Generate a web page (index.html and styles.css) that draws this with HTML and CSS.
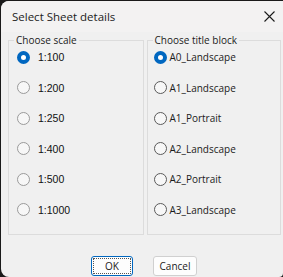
FILE: index.html
```html
<!DOCTYPE html>
<html lang="en">
<head>
  <meta charset="UTF-8" />
  <title>Select Sheet details</title>
  <link rel="stylesheet" href="styles.css">
</head>
<body>
  <div class="window">
    <div class="titlebar">
      <span class="title">Select Sheet details</span>
      <svg class="close" width="11" height="11" viewBox="0 0 11 11">
        <path d="M0.5 0.5 L10.5 10.5 M10.5 0.5 L0.5 10.5" stroke="#1b1b1b" stroke-width="1.1" fill="none"/>
      </svg>
    </div>

    <div class="groups">
      <fieldset class="group scale">
        <legend>Choose scale</legend>
        <div class="option"><span class="radio checked"></span><span class="label">1:100</span></div>
        <div class="option"><span class="radio"></span><span class="label">1:200</span></div>
        <div class="option"><span class="radio"></span><span class="label">1:250</span></div>
        <div class="option"><span class="radio"></span><span class="label">1:400</span></div>
        <div class="option"><span class="radio"></span><span class="label">1:500</span></div>
        <div class="option"><span class="radio"></span><span class="label">1:1000</span></div>
      </fieldset>

      <fieldset class="group block">
        <legend>Choose title block</legend>
        <div class="option"><span class="radio checked"></span><span class="label">A0_Landscape</span></div>
        <div class="option"><span class="radio"></span><span class="label">A1_Landscape</span></div>
        <div class="option"><span class="radio"></span><span class="label">A1_Portrait</span></div>
        <div class="option"><span class="radio"></span><span class="label">A2_Landscape</span></div>
        <div class="option"><span class="radio"></span><span class="label">A2_Portrait</span></div>
        <div class="option"><span class="radio"></span><span class="label">A3_Landscape</span></div>
      </fieldset>
    </div>

    <div class="buttons">
      <button class="btn default"><span class="focus">OK</span></button>
      <button class="btn">Cancel</button>
    </div>
  </div>
</body>
</html>
```

FILE: styles.css
```css
body {
  margin: 0;
  padding: 0;
  background: #1a1a1a;
  overflow: hidden;
  font-family: 'Open Sans', 'Noto Sans', sans-serif;
  color: #1b1b1b;
}

.window {
  margin: 1px 0 0 1px;
  width: 282px;
  height: 276px;
  background: #f0f0f0;
  border-radius: 8px 0 4px 8px;
  overflow: hidden;
}

.titlebar {
  height: 31px;
  display: flex;
  align-items: center;
  justify-content: space-between;
  padding: 0 8px 0 11px;
  background: #f3f2f2;
}

.title {
  font-size: 11.5px;
  margin-top: -1px;
}

.close {
  margin-top: -1px;
}

.groups {
  display: flex;
  gap: 3px;
  padding: 0 2px 0 7px;
}

.group {
  margin: 0;
  padding: 1px 0 16px 0;
  border: 1px solid #dcdcdc;
  display: flex;
  flex-direction: column;
  gap: 14.5px;
  min-width: 0;
}

.group legend {
  font-size: 10px;
  line-height: 16px;
  margin-left: 5px;
  padding: 0 2px;
  color: #1b1b1b;
}

.scale {
  width: 134px;
}

.block {
  width: 133px;
}

.option {
  height: 16px;
  display: flex;
  align-items: center;
}

.radio {
  box-sizing: border-box;
  width: 13px;
  height: 13px;
  border-radius: 50%;
  border: 1px solid #9a9a9a;
  background: #f7f7f7;
  flex: none;
}

.radio.checked {
  border: 4px solid #0067c0;
  background: #fff;
}

.scale .option {
  padding-left: 8px;
}

.scale .label {
  margin-left: 8px;
  font-family: 'Liberation Sans', Arial, sans-serif;
  font-size: 10.5px;
  color: #111;
}

.block .option {
  padding-left: 6px;
}

.block .radio {
  border-color: #5a5a5a;
}

.block .radio.checked {
  border-color: #0067c0;
}

.block .label {
  margin-left: 3px;
  font-size: 10px;
}

.buttons {
  display: flex;
  gap: 20px;
  padding: 21px 0 0 90px;
}

.btn {
  box-sizing: border-box;
  height: 20px;
  padding: 0;
  font-family: 'Open Sans', 'Noto Sans', sans-serif;
  font-size: 10px;
  color: #1b1b1b;
  background: #fdfdfd;
  border: 1px solid #d0d0d0;
  border-radius: 3px;
  width: 44px;
}

.btn.default {
  width: 42px;
  border: 1px solid #0067c0;
  padding: 1px;
}

.focus {
  display: flex;
  align-items: center;
  justify-content: center;
  height: 100%;
  border: 1px dotted #555;
  box-sizing: border-box;
}
```
